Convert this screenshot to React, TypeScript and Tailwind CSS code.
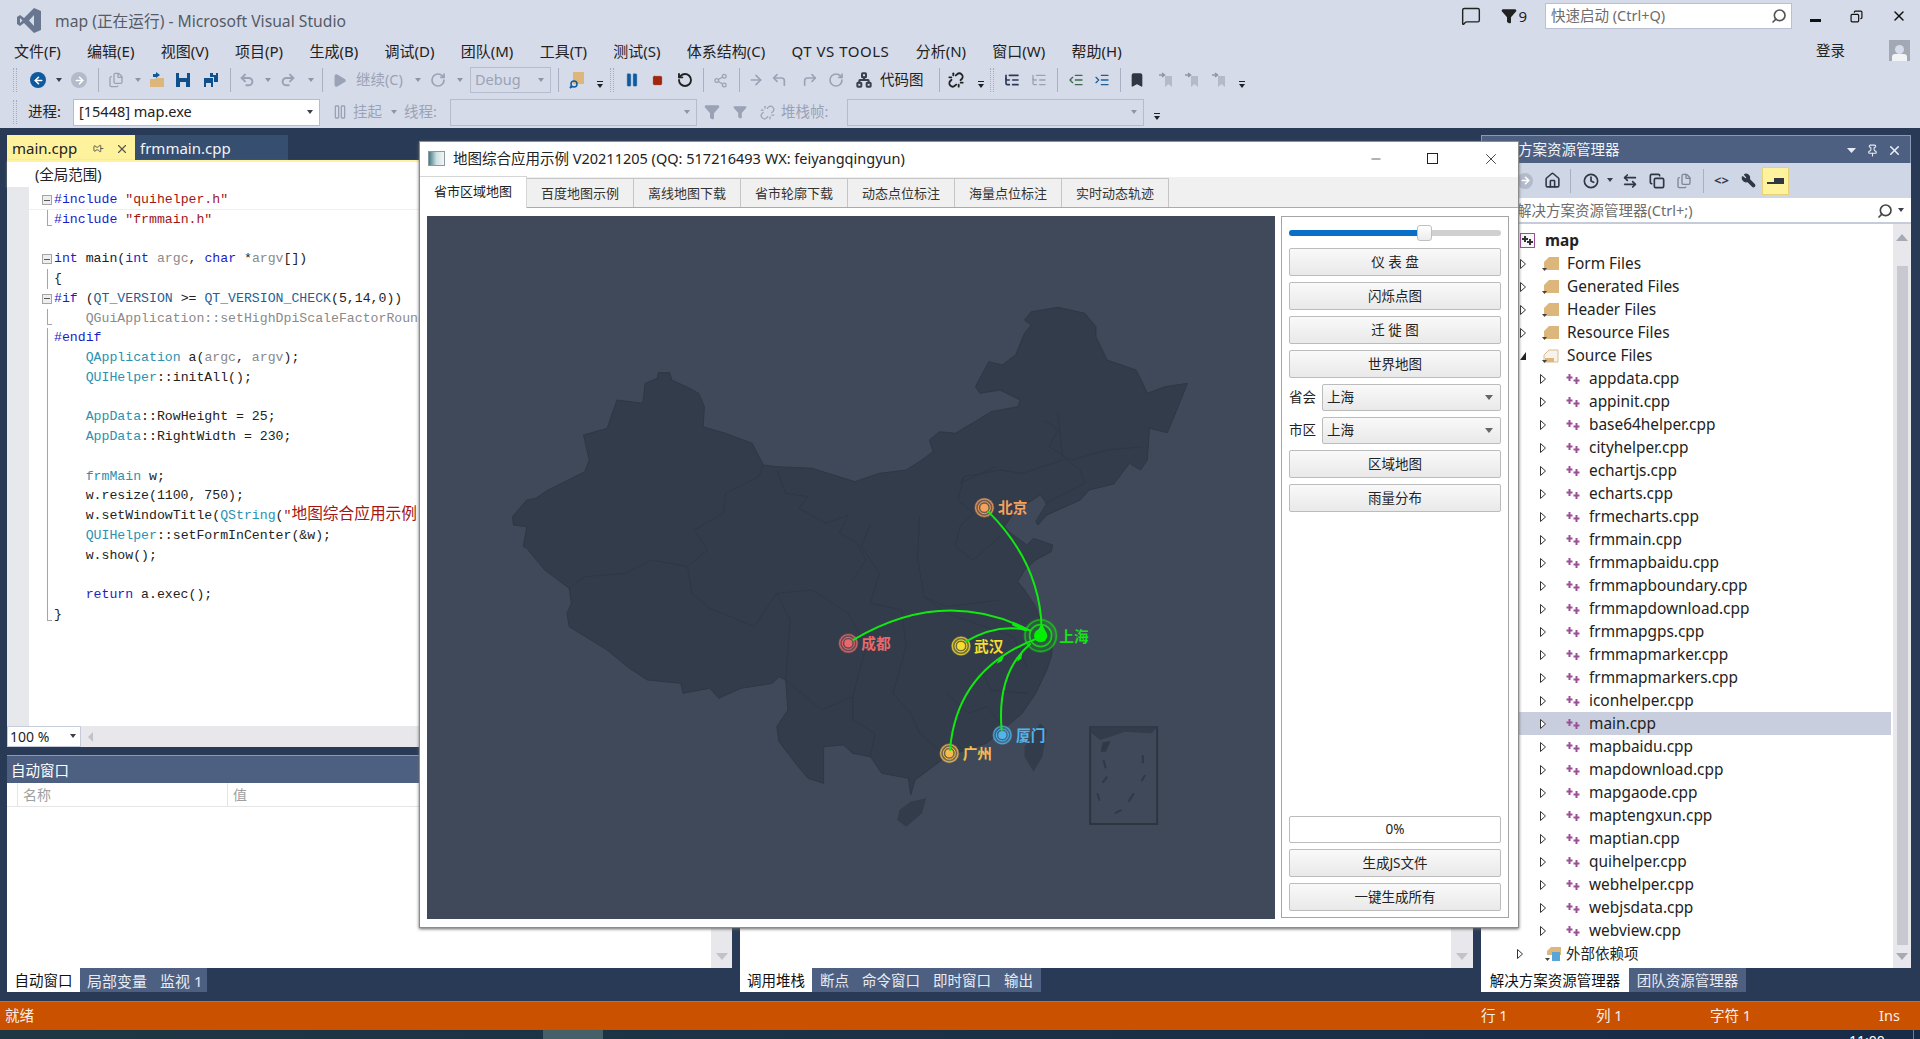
import {
  ArrowLeft, ArrowRight, Bookmark, Clock, Copy, Files, Home, MessageSquare, Minus, Pause, Pin, Play, Redo2,
  RotateCw, Search, Square, Undo2, Wrench, X, ArrowLeftRight, CornerUpLeft, CornerUpRight,
  ListTree, Network, Share2, ListIndentIncrease, ListIndentDecrease, Filter as Funnel, Pause as Suspend, Unlink,
} from 'lucide-react'

const GRAY = '#9aa3b5'

function Grip({ cls }: { cls: string }) {
  return <div className={`h-[24px] w-[4px] border-x border-dotted border-[#a3abc0] ${cls}`} />
}
function Sep({ cls }: { cls: string }) {
  return <div className={`h-[24px] w-px bg-[#a8b0c4] ${cls}`} />
}
function Dd({ cls, dark }: { cls: string; dark?: boolean }) {
  return (
    <svg width="8" height="5" viewBox="0 0 8 5" className={cls}>
      <path d="M1 0h6L4 4z" fill={dark ? '#3a3f4c' : '#8d96a9'} />
    </svg>
  )
}
function Over({ cls }: { cls: string }) {
  return (
    <svg width="8" height="8" viewBox="0 0 8 8" className={`mt-[10px] ${cls}`}>
      <path d="M1 0h6v1H1zM1 3h6L4 7z" fill="#222" />
    </svg>
  )
}
function Circle({ cls, color, arrow }: { cls: string; color: string; arrow: 'l' | 'r' }) {
  return (
    <div className={`flex h-[16px] w-[16px] items-center justify-center rounded-full ${cls}`} style={{ background: color }}>
      {arrow === 'l' ? <ArrowLeft size={11} color="white" strokeWidth={3.5} /> : <ArrowRight size={11} color="white" strokeWidth={3.5} />}
    </div>
  )
}
function BookmarkNav({ cls }: { cls: string }) {
  return (
    <svg width="16" height="16" viewBox="0 0 16 16" className={cls}>
      <path d="M7 4h7v11l-3.500-3L7 15z" fill="#b3bac9" />
      <path d="M1 3h5M4 1l2.500 2L4 5" fill="none" stroke="#8d96a9" strokeWidth="1.500" />
    </svg>
  )
}

function TreeChevron({ open, cls }: { open?: boolean; cls: string }) {
  return (
    <svg width="8" height="12" viewBox="0 0 8 12" className={`shrink-0 ${cls}`}>
      {open ? <path d="M7 2v8H1z" fill="#222" /> : <path d="M1.500 1.500 6.500 6l-5 4.500z" fill="white" stroke="#333" />}
    </svg>
  )
}
function CppIcon() {
  return (
    <svg width="15" height="12" viewBox="0 0 15 12" className="shrink-0">
      <path d="M3.500 1v7M0.500 4.500h6M10.500 4v7M7.500 7.500h6" stroke="#9b4f96" strokeWidth="2" />
    </svg>
  )
}
function TanFolder({ open }: { open?: boolean }) {
  return (
    <svg width="17" height="17" viewBox="0 0 17 17" className="shrink-0">
      {open ? (
        <path d="M2 8l5-5h9v12H2z" fill="#f7f3ec" stroke="#d9be8f" />
      ) : (
        <path d="M2 7l5-5h10v13H2z" fill="#dcb67a" />
      )}
      {open && <path d="M3 11h9v4H3z" fill="#dcb67a" />}
      <path d="M0 13h5L2.500 16z" fill="#444" />
    </svg>
  )
}

const FILES = [
  'appdata.cpp', 'appinit.cpp', 'base64helper.cpp', 'cityhelper.cpp', 'echartjs.cpp', 'echarts.cpp', 'frmecharts.cpp',
  'frmmain.cpp', 'frmmapbaidu.cpp', 'frmmapboundary.cpp', 'frmmapdownload.cpp', 'frmmapgps.cpp', 'frmmapmarker.cpp',
  'frmmapmarkers.cpp', 'iconhelper.cpp', 'main.cpp', 'mapbaidu.cpp', 'mapdownload.cpp', 'mapgaode.cpp',
  'maptengxun.cpp', 'maptian.cpp', 'quihelper.cpp', 'webhelper.cpp', 'webjsdata.cpp', 'webview.cpp',
]

const K = ({ c }: { c: string }) => <span className="text-[#1c1cc8]">{c}</span>
const T = ({ c }: { c: string }) => <span className="text-[#2b91af]">{c}</span>
const G = ({ c }: { c: string }) => <span className="text-[#8a8a8a]">{c}</span>
const S = ({ c }: { c: string }) => <span className="text-[#a31515]">{c}</span>
const M = ({ c }: { c: string }) => <span className="text-[#1f5f96]">{c}</span>

const CODE: { fold?: 'box' | 'line' | 'end'; code?: React.ReactNode }[] = [
  { fold: 'box', code: <><K c="#include" /> <S c={'"quihelper.h"'} /></> },
  { fold: 'end', code: <><K c="#include" /> <S c={'"frmmain.h"'} /></> },
  {},
  { fold: 'box', code: <><K c="int" /> main(<K c="int" /> <G c="argc" />, <K c="char" /> *<G c="argv" />[])</> },
  { fold: 'line', code: '{' },
  { fold: 'box', code: <><K c="#if" /> (<M c="QT_VERSION" /> &gt;= <M c="QT_VERSION_CHECK" />(5,14,0))</> },
  { fold: 'end', code: <G c="    QGuiApplication::setHighDpiScaleFactorRoundingPolicy" /> },
  { fold: 'line', code: <K c="#endif" /> },
  { fold: 'line', code: <>    <T c="QApplication" /> a(<G c="argc" />, <G c="argv" />);</> },
  { fold: 'line', code: <>    <T c="QUIHelper" />::initAll();</> },
  { fold: 'line' },
  { fold: 'line', code: <>    <T c="AppData" />::RowHeight = 25;</> },
  { fold: 'line', code: <>    <T c="AppData" />::RightWidth = 230;</> },
  { fold: 'line' },
  { fold: 'line', code: <>    <T c="frmMain" /> w;</> },
  { fold: 'line', code: '    w.resize(1100, 750);' },
  { fold: 'line', code: <>    w.setWindowTitle(<T c="QString" />(<S c={'"'} /><span className="text-[15.700px] leading-[19px] text-[#a31515]">地图综合应用示例</span></> },
  { fold: 'line', code: <>    <T c="QUIHelper" />::setFormInCenter(&amp;w);</> },
  { fold: 'line', code: '    w.show();' },
  { fold: 'line' },
  { fold: 'line', code: <>    <K c="return" /> a.exec();</> },
  { fold: 'end', code: '}' },
]

function QtButton({ label, cls }: { label: string; cls?: string }) {
  return (
    <div className={`flex h-[28px] items-center justify-center rounded-[2px] border border-[#bcbcbc] bg-gradient-to-b from-[#f9f9f9] to-[#e9e9e9] text-[13.500px] text-[#222] ${cls ?? ''}`}>
      {label}
    </div>
  )
}
function QtCombo({ label }: { label: string }) {
  return (
    <div className="flex h-[27px] items-center gap-[6px]">
      <span className="w-[27px] text-[13.500px] text-[#222]">{label}</span>
      <div className="flex h-[27px] flex-1 items-center justify-between rounded-[2px] border border-[#bcbcbc] bg-gradient-to-b from-[#f9f9f9] to-[#e9e9e9] pl-[4px] pr-[7px] text-[13.500px] text-[#222]">
        上海
        <svg width="8" height="5" viewBox="0 0 8 5"><path d="M0 0h8L4 5z" fill="#666" /></svg>
      </div>
    </div>
  )
}

const LAND =
  '28,110 60,60 80,55 105,32 190,-25 200,-60 187,-135 240,-155 262,-240 320,-230 325,-290 352,-305 355,-322 380,-322 385,-300 425,-275 445,-260 458,-220 455,-160 505,-140 565,-110 590,-45 620,-40 700,-35 735,-20 795,5 850,-20 910,-30 945,-60 970,-85 962,-120 985,-145 1020,-140 1070,-180 1100,-205 1160,-220 1165,-240 1120,-270 1075,-260 1065,-280 1095,-355 1125,-345 1155,-375 1175,-440 1190,-465 1175,-480 1190,-505 1250,-518 1310,-500 1335,-460 1335,-430 1360,-360 1425,-330 1440,-290 1450,-260 1490,-280 1540,-290 1510,-190 1495,-142 1455,-155 1450,-60 1435,-30 1410,-50 1375,12 1320,30 1300,60 1225,105 1205,135 1200,125 1225,70 1210,45 1170,80 1150,100 1130,140 1145,160 1180,195 1195,175 1238,195 1235,215 1200,240 1175,270 1160,305 1175,330 1200,380 1210,420 1240,470 1235,530 1225,570 1200,640 1170,700 1130,745 1090,790 1000,830 960,870 930,900 920,945 915,895 855,880 830,830 790,820 770,795 725,800 725,910 690,895 665,855 625,785 620,740 645,690 640,600 625,590 610,610 540,625 490,655 470,625 410,640 405,610 330,600 290,565 240,510 155,440 150,400 160,370 155,325 100,270 60,205 52,200 60,140 30,135'

const BORDERS = [
  '590,-45 580,-10 505,40 500,100 435,150 465,210 420,260 340,240 280,280 190,290 155,325',
  '420,260 430,340 470,385 570,440 620,340 650,420 640,600',
  '620,-30 640,40 690,50 670,85 730,130 780,105 760,160 800,190 820,240 790,300',
  '830,130 810,200 850,280 830,370 900,390 910,500',
  '940,110 935,230 950,350 1000,380 1120,360',
  '1040,-10 1025,60 1060,100 1030,140 1020,200 1060,240 1120,170',
  '1110,-40 1030,10 1040,-10 1120,-30 1170,-20 1260,-60',
  '1250,-200 1260,-70 1300,-30 1310,10 1220,70',
  '1220,-180 1250,-150 1230,-100 1280,-60 1360,-90 1440,-100',
  '640,600 720,690 790,650 790,720 840,760 830,830',
  '910,500 880,640 920,700 940,760 1000,830',
  '1000,640 1050,700 1090,680 1130,745',
  '1075,560 1100,630 1180,640',
  '950,350 1000,400 1150,470 1180,560',
  '620,340 700,330 780,400 820,500 790,650',
]

function ChinaMap() {
  const cities = [
    { x: 553, y: 143, c: '#f6a15c', n: '北京', r: 26, tx: 594, ty: 160 },
    { x: 145, y: 550, c: '#e8696b', n: '成都', r: 26, tx: 184, ty: 568 },
    { x: 483, y: 558, c: '#f7de2e', n: '武汉', r: 26, tx: 522, ty: 576 },
    { x: 448, y: 880, c: '#f6bd4e', n: '广州', r: 26, tx: 488, ty: 898 },
    { x: 607, y: 825, c: '#4fb6ee', n: '厦门', r: 26, tx: 648, ty: 844 },
  ]
  return (
    <svg viewBox="427 216 848 703" className="h-[703px] w-[848px] bg-[#3f4959]">
      <g transform="translate(500 480) scale(0.4464 0.3333)">
        <polygon points={LAND} fill="#333c4a" stroke="#2f3744" strokeWidth="1" vectorEffect="non-scaling-stroke" />
        {BORDERS.map((b) => (
          <polyline key={b} points={b} fill="none" stroke="#2e3744" strokeWidth="1" vectorEffect="non-scaling-stroke" />
        ))}
        <polygon points="1175,800 1210,730 1225,750 1215,830 1195,875 1175,830" fill="#333c4a" />
        <polygon points="895,990 920,965 955,955 945,1000 910,1040 890,1020" fill="#333c4a" />
        <rect x="1322" y="742" width="150" height="290" fill="none" stroke="#2d3541" strokeWidth="2" vectorEffect="non-scaling-stroke" />
        <polygon points="1322,742 1472,742 1460,760 1400,755 1345,780 1325,760" fill="#333c4a" />
        <path d="M1352 790l12-3-8 25h-8zM1352 840l5 25M1440 825v25M1445 885l-8 18M1360 890l-10 18M1338 940l5 22M1420 940l-12 25M1392 990l-15 10" stroke="#303946" strokeWidth="2" fill="#303946" vectorEffect="non-scaling-stroke" />
      </g>
      <g transform="translate(800 460) scale(0.3333)">
        {cities.map((p) => (
          <g key={p.n}>
            <circle cx={p.x} cy={p.y} r={p.r + 4} fill={p.c} opacity="0.3" />
            <circle cx={p.x} cy={p.y} r={p.r} fill="none" stroke={p.c} strokeWidth="4" opacity="0.75" />
            <circle cx={p.x} cy={p.y} r={p.r - 8} fill="none" stroke={p.c} strokeWidth="3" />
            <circle cx={p.x} cy={p.y} r={12} fill={p.c} />
            <text x={p.tx} y={p.ty} fill={p.c} fontSize="44" fontWeight="700" fontFamily="'Noto Sans CJK SC', sans-serif">{p.n}</text>
          </g>
        ))}
        <circle cx="722" cy="527" r="52" fill="#16e016" opacity="0.2" />
        <circle cx="722" cy="527" r="47" fill="none" stroke="#18d018" strokeWidth="5" opacity="0.7" />
        <circle cx="722" cy="527" r="33" fill="none" stroke="#18e018" strokeWidth="5" opacity="0.85" />
        <circle cx="722" cy="527" r="20" fill="#00f000" />
        <text x="778" y="546" fill="#18e018" fontSize="44" fontWeight="700" fontFamily="'Noto Sans CJK SC', sans-serif">上海</text>
        <g fill="none" stroke="#10ea10" strokeWidth="6" strokeLinecap="round">
          <path d="M565 155Q720 310 725 505" />
          <path d="M160 540Q430 379 690 512" />
          <path d="M497 545Q590 490 680 510" />
          <path d="M450 870Q470 630 705 538" />
          <path d="M605 810Q590 640 690 552" />
        </g>
        <g fill="#10ea10">
          <path d="M725 490l12 24-24 0z" />
          <path d="M640 485l40 20-4 9-40-18z" />
          <path d="M612 587l-6 16-16 8 8-16z" />
          <path d="M668 575l-4 20-12 10 4-20z" />
        </g>
      </g>
    </svg>
  )
}

export default function App() {
  return (
    <div className="relative flex h-[1039px] w-[1920px] flex-col overflow-hidden bg-[#293a56] font-['Noto_Sans','Noto_Sans_CJK_SC',sans-serif] text-[#1e1e1e]">
      {/* Title + menu + toolbars */}
      <header className="flex h-[128px] shrink-0 flex-col bg-[#d6dbe9]">
        <div className="flex h-[40px] items-start">
          <svg width="24" height="25" viewBox="0 0 24 25" className="ml-[17px] mt-[8px]">
            <path d="M17 0l7 3v19l-7 3L7 15l-4 3-3-2V9l3-2 4 3zM17 7l-5 5.500 5 5.500zM3 10v5l2.500-2.500z" fill="#68768f" fillRule="evenodd" />
          </svg>
          <span className="ml-[14px] mt-[10px] text-[15.700px] text-[#555b66]">map (正在运行) - Microsoft Visual Studio</span>
          <div className="ml-auto mt-[3px] flex items-center">
            <MessageSquare size={20} strokeWidth={1.700} color="#222" />
            <Funnel size={16} className="ml-[20px]" fill="#222" color="#222" />
            <span className="ml-[1px] text-[15px]">9</span>
            <div className="ml-[18px] flex h-[26px] w-[247px] items-center justify-between border border-[#b8c0d2] bg-white pl-[5px] pr-[4px] text-[14.500px] text-[#6d6d6d]">
              快速启动 (Ctrl+Q)
              <Search size={16} strokeWidth={2.500} color="#555" className="-scale-x-100" />
            </div>
            <div className="ml-[18px] mt-[9px] h-[3px] w-[11px] bg-[#111]" />
            <Copy size={13} strokeWidth={2.200} color="#111" className="ml-[29px] -scale-x-100" />
            <X size={16} strokeWidth={2.200} color="#111" className="ml-[28px] mr-[13px]" />
          </div>
        </div>
        <div className="relative flex h-[22px] items-center gap-[26.300px] pl-[14px] text-[15px] text-[#222]">
          {['文件(F)', '编辑(E)', '视图(V)', '项目(P)', '生成(B)', '调试(D)', '团队(M)', '工具(T)', '测试(S)', '体系结构(C)'].map((m) => (
            <span key={m}>{m}</span>
          ))}
          <span className="tracking-[0.500px]">QT VS TOOLS</span>
          {['分析(N)', '窗口(W)', '帮助(H)'].map((m) => (
            <span key={m}>{m}</span>
          ))}
          <span className="ml-auto mr-[75px] text-[14.500px]">登录</span>
          <div className="absolute right-[10px] top-0 flex h-[21px] w-[21px] flex-col items-center justify-end overflow-hidden bg-[#a3a8b5]">
            <div className="h-[9px] w-[9px] rounded-full bg-[#d6dbe9]" />
            <div className="h-[7px] w-[15px] rounded-t-[3px] bg-[#f2f3f6]" />
          </div>
        </div>
        <div className="mt-[2px] flex h-[32px] items-center text-[14.500px] text-[#9aa3b5]">
          <Grip cls="ml-[13px]" />
          <Circle cls="ml-[13px]" color="#0e5a9e" arrow="l" />
          <Dd dark cls="ml-[9px]" />
          <Circle cls="ml-[8px]" color="#b3bac9" arrow="r" />
          <Sep cls="ml-[11px]" />
          <Files size={16} color={GRAY} className="ml-[9px]" />
          <Dd cls="ml-[10px]" />
          <svg width="16" height="16" viewBox="0 0 16 16" className="ml-[7px]"><path d="M1 7h5l1-1h8v9H1z" fill="#dcb67a" /><path d="M4 5V2h3V0l4 3-4 3V5z" fill="#0e5a9e" /></svg>
          <svg width="16" height="16" viewBox="0 0 16 16" className="ml-[10px]"><path d="M1 1h14v14H1z" fill="#0e4f8c" /><path d="M4 1h8v5H4zM5 10h6v5H5z" fill="#d6dbe9" /></svg>
          <svg width="16" height="16" viewBox="0 0 16 16" className="ml-[12px]"><path d="M1 6h9v9H1z" fill="#0e4f8c" /><path d="M7 1h8v9h-4V5H7z" fill="#0e4f8c" /><path d="M3 11h5v4H3zM10 1h3v2h-3z" fill="#d6dbe9" /></svg>
          <Sep cls="ml-[11px]" />
          <Undo2 size={16} color={GRAY} strokeWidth={3} className="ml-[8px]" />
          <Dd cls="ml-[9px]" />
          <Redo2 size={16} color={GRAY} strokeWidth={3} className="ml-[8px]" />
          <Dd cls="ml-[11px]" />
          <Sep cls="ml-[7px]" />
          <Play size={15} color={GRAY} fill={GRAY} className="ml-[9px]" />
          <span className="ml-[9px] w-[50px] whitespace-nowrap">继续(C)</span>
          <Dd cls="ml-[8px]" />
          <RotateCw size={16} color={GRAY} strokeWidth={2.500} className="ml-[8px]" />
          <Dd cls="ml-[10px]" />
          <div className="ml-[6px] flex h-[26px] w-[81px] items-center justify-between border border-[#b5bccd] pl-[4px] pr-[5px]">
            Debug <Dd cls="" />
          </div>
          <Sep cls="ml-[7px]" />
          <svg width="16" height="18" viewBox="0 0 16 18" className="ml-[10px]"><path d="M4 1h11v12H4z" fill="#dcb67a" /><circle cx="5" cy="13" r="3" fill="none" stroke="#0e5a9e" strokeWidth="1.500" /><path d="M3 15l-2 2" stroke="#0e5a9e" strokeWidth="2" /></svg>
          <Over cls="ml-[11px]" />
          <Grip cls="ml-[6px]" />
          <Pause size={16} color="#0e5a9e" fill="#0e5a9e" strokeWidth={1} className="ml-[10px]" />
          <Square size={11} color="#a1260d" fill="#a1260d" className="ml-[12px] mr-[3px]" />
          <RotateCw size={16} color="#222" strokeWidth={2.800} className="ml-[11px] -scale-x-100" />
          <Sep cls="ml-[10px]" />
          <Share2 size={15} color={GRAY} className="ml-[9px]" />
          <Sep cls="ml-[11px]" />
          <ArrowRight size={16} color={GRAY} strokeWidth={2.500} className="ml-[8px]" />
          <CornerUpLeft size={16} color={GRAY} strokeWidth={2.500} className="ml-[7px]" />
          <CornerUpRight size={16} color={GRAY} strokeWidth={2.500} className="ml-[15px]" />
          <RotateCw size={16} color={GRAY} strokeWidth={2.500} className="ml-[10px]" />
          <Network size={16} color="#3a3f4c" strokeWidth={3} className="ml-[12px]" />
          <span className="ml-[8px] w-[45px] whitespace-nowrap text-[#222]">代码图</span>
          <Sep cls="ml-[14px]" />
          <Unlink size={16} color="#222" strokeWidth={2.800} className="ml-[8px]" />
          <Over cls="ml-[13px]" />
          <Grip cls="ml-[5px]" />
          <ListTree size={16} color="#2a3a57" strokeWidth={2.500} className="ml-[10px]" />
          <ListTree size={16} color={GRAY} className="ml-[11px]" />
          <Sep cls="ml-[10px]" />
          <ListIndentDecrease size={16} color="#3c6b4a" className="ml-[10px]" />
          <ListIndentIncrease size={16} color="#1f5f96" className="ml-[10px]" />
          <Sep cls="ml-[10px]" />
          <Bookmark size={16} color="#2f3744" fill="#2f3744" className="ml-[8px]" />
          <BookmarkNav cls="ml-[13px]" />
          <BookmarkNav cls="ml-[10px]" />
          <BookmarkNav cls="ml-[11px]" />
          <Over cls="ml-[11px]" />
        </div>
        <div className="flex h-[32px] items-center text-[14.500px] text-[#9aa3b5]">
          <Grip cls="ml-[13px]" />
          <span className="ml-[11px] w-[35px] whitespace-nowrap text-[#222]">进程:</span>
          <div className="ml-[10px] flex h-[27px] w-[247px] items-center justify-between border border-[#b5bccd] bg-white pl-[5px] pr-[5px] text-[#222]">
            [15448] map.exe <Dd dark cls="" />
          </div>
          <Suspend size={16} color={GRAY} className="ml-[12px]" />
          <span className="ml-[5px] w-[31px] whitespace-nowrap">挂起</span>
          <Dd cls="ml-[6px]" />
          <span className="ml-[6px] w-[35px] whitespace-nowrap">线程:</span>
          <div className="ml-[11px] flex h-[27px] w-[247px] items-center justify-end border border-[#b5bccd] pr-[5px]"><Dd cls="" /></div>
          <Funnel size={16} color={GRAY} fill={GRAY} className="ml-[7px]" />
          <Funnel size={14} color={GRAY} fill={GRAY} className="ml-[13px]" />
          <Unlink size={15} color={GRAY} className="ml-[13px]" />
          <span className="ml-[6px] w-[49px] whitespace-nowrap">堆栈帧:</span>
          <div className="ml-[17px] flex h-[27px] w-[297px] items-center justify-end border border-[#b5bccd] pr-[5px]"><Dd cls="" /></div>
          <Over cls="ml-[9px]" />
        </div>
      </header>

      {/* Docked panes */}
      <main className="flex min-h-0 flex-1 pl-[7px] pr-[9px] pt-[7px]">
        <div className="flex w-[1466px] shrink-0 flex-col">
          <div className="flex h-[25px] text-[15px]">
            <div className="flex w-[128px] items-center bg-[#fff29d] pl-[5px] pt-[2px] text-[#222]">
              main.cpp
              <Pin size={11} className="ml-[16px] -rotate-90" color="#555" />
              <X size={14} className="ml-[11px]" color="#555" />
            </div>
            <div className="flex w-[153px] items-center bg-[#364e6f] pl-[5px] pt-[2px] text-[#f2f4f8]">frmmain.cpp</div>
          </div>
          <div className="flex h-[27px] items-center border-t-2 border-[#fff29d] bg-white pl-[28px] text-[14.500px] text-[#222] shadow-[0_1px_2px_#8a8a8a]">(全局范围)</div>
          <div className="flex h-[539px] overflow-hidden bg-white">
            <div className="w-[22px] shrink-0 bg-[#e7e8ec]" />
            <div className="pt-[3px] font-['Liberation_Mono','Noto_Sans_CJK_SC',monospace] text-[13.200px] leading-[19.750px] text-[#222]">
              {CODE.map((row, i) => (
                <div key={i} className={`flex h-[19.750px] w-[1400px] ${i === 0 ? 'border-b border-[#efefef]' : ''}`}>
                  <div className="relative w-[25px] shrink-0">
                    {row.fold === 'box' && (
                      <div className="absolute left-[13px] top-[5px] flex h-[10px] w-[10px] items-center justify-center border border-[#a5a5a5] bg-[#eee]">
                        <div className="h-px w-[6px] bg-[#555]" />
                      </div>
                    )}
                    {row.fold === 'line' && <div className="absolute left-[18px] top-0 h-full w-px bg-[#a5a5a5]" />}
                    {row.fold === 'end' && <div className="absolute left-[18px] top-0 h-[16px] w-[5px] border-b border-l border-[#a5a5a5]" />}
                  </div>
                  <span className="whitespace-pre">{row.code}</span>
                </div>
              ))}
            </div>
          </div>
          <div className="flex h-[21px] bg-[#e8e8ec]">
            <div className="flex w-[74px] items-center justify-between border border-[#c5cbd9] bg-white pl-[2px] pr-[3px] text-[14px]">
              100 % <Dd dark cls="" />
            </div>
            <svg width="6" height="10" viewBox="0 0 6 10" className="ml-[7px] mt-[6px]"><path d="M5 0v10L0 5z" fill="#c2c3c9" /></svg>
          </div>
          <div className="mt-[8px] flex min-h-0 flex-1 gap-[8px]">
            <section className="flex w-[725px] flex-col">
              <div className="flex h-[28px] items-center border-t border-[#8a9ab5] bg-[#4d6082] pl-[4px] pt-[2px] text-[14.500px] text-white">自动窗口</div>
              <div className="relative flex-1 bg-white">
                <div className="flex h-[24px] items-center border-b border-[#e5e5e5] text-[14px] text-[#a0a0a0]">
                  <div className="h-full w-[11px] border-r border-[#e5e5e5]" />
                  <span className="w-[210px] border-r border-[#e5e5e5] pl-[5px] leading-[24px]">名称</span>
                  <span className="pl-[5px]">值</span>
                </div>
                <div className="absolute bottom-0 right-0 top-0 flex w-[21px] items-end justify-center bg-[#e8e8ec] pb-[8px]">
                  <svg width="12" height="7" viewBox="0 0 12 7"><path d="M0 0h12L6 7z" fill="#c2c3c9" /></svg>
                </div>
              </div>
              <div className="flex h-[24px] text-[14.500px]">
                <div className="flex w-[73px] items-center justify-center bg-white pt-[2px] text-[#111]">自动窗口</div>
                <div className="flex w-[127px] items-center gap-[13px] bg-[#4d6082] pl-[7px] pt-[2px] text-[#e8ecf3]">
                  <span className="text-[15px]">局部变量</span><span className="text-[15px]">监视 1</span>
                </div>
              </div>
            </section>
            <section className="flex flex-1 flex-col">
              <div className="relative flex-1 bg-white">
                <div className="absolute bottom-0 right-0 top-0 flex w-[22px] items-end justify-center bg-[#e8e8ec] pb-[8px]">
                  <svg width="12" height="7" viewBox="0 0 12 7"><path d="M0 0h12L6 7z" fill="#c2c3c9" /></svg>
                </div>
              </div>
              <div className="flex h-[24px] text-[14.500px]">
                <div className="flex w-[72px] items-center justify-center bg-white pt-[2px] text-[#111]">调用堆栈</div>
                <div className="flex w-[229px] items-center gap-[13px] bg-[#4d6082] pl-[8px] pt-[2px] text-[#e8ecf3]">
                  <span>断点</span><span>命令窗口</span><span>即时窗口</span><span>输出</span>
                </div>
              </div>
            </section>
          </div>
        </div>

        {/* Solution explorer */}
        <aside className="ml-[8px] flex min-w-0 flex-1 flex-col pb-0">
          <div className="flex h-[28px] items-center border border-b-0 border-[#8a9ab5] bg-[#4d6082] pl-[7px] pr-[8px] pt-[1px] text-[14.500px] text-[#f2f4f8]">
            解决方案资源管理器
            <svg width="9" height="5" viewBox="0 0 9 5" className="ml-auto"><path d="M0 0h9L4.500 5z" fill="#e8ecf3" /></svg>
            <Pin size={13} color="#e8ecf3" className="ml-[10px]" />
            <X size={15} color="#e8ecf3" strokeWidth={2.500} className="ml-[8px]" />
          </div>
          <div className="flex h-[35px] items-center bg-[#cfd6e5]">
            <Circle cls="ml-[36px]" color="#b3bac9" arrow="r" />
            <Home size={17} color="#2f3744" strokeWidth={2.200} className="ml-[11px]" />
            <Sep cls="ml-[9px]" />
            <Clock size={16} color="#2f3744" strokeWidth={2.500} className="ml-[12px]" />
            <Dd dark cls="ml-[7px]" />
            <ArrowLeftRight size={16} color="#2f3744" strokeWidth={2.500} className="ml-[8px]" />
            <Copy size={16} color="#2f3744" strokeWidth={2.500} className="ml-[11px]" />
            <Files size={16} color="#7d8698" className="ml-[11px]" />
            <Sep cls="ml-[11px]" />
            <span className="ml-[10px] text-[13px] font-bold text-[#2f3744]">&lt;&gt;</span>
            <Wrench size={15} color="#2f3744" fill="#2f3744" className="ml-[12px] -scale-x-100" />
            <div className="ml-[6px] flex h-[28px] w-[27px] items-center justify-center border border-[#e6d27a] bg-[#fff29d]">
              <svg width="17" height="8" viewBox="0 0 17 8"><path d="M0 5h17v2H0zM7 1h10v5H7z" fill="#2f3744" /></svg>
            </div>
          </div>
          <div className="flex h-[26px] items-center border-b-2 border-[#c5cbd9] bg-white pl-[36px] pr-[6px] pt-[1px] text-[14.500px] text-[#6d6d6d]">
            解决方案资源管理器(Ctrl+;)
            <Search size={16} strokeWidth={2.500} color="#444" className="ml-auto -scale-x-100" />
            <Dd dark cls="ml-[4px]" />
          </div>
          <div className="relative min-h-0 flex-1 bg-white pt-[5px] text-[15.400px] leading-[23px] text-[#222]">
            <div className="flex h-[23px] items-center pl-[39px]">
              <svg width="15" height="15" viewBox="0 0 15 15" className="shrink-0"><rect x="0.500" y="0.500" width="14" height="14" fill="#f6f6f6" stroke="#9b4f96" /><path d="M5 3v6M2 6h6M10 6v6M7 9h6" stroke="#333" strokeWidth="2" /></svg>
              <span className="ml-[10px] font-bold">map</span>
            </div>
            {['Form Files', 'Generated Files', 'Header Files', 'Resource Files', 'Source Files'].map((f) => (
              <div key={f} className="flex h-[23px] items-center pl-[38px]">
                <TreeChevron open={f === 'Source Files'} cls="" />
                <div className="ml-[15px]"><TanFolder open={f === 'Source Files'} /></div>
                <span className="ml-[8px]">{f}</span>
              </div>
            ))}
            {FILES.map((f) => (
              <div key={f} className={`mr-[20px] flex h-[23px] items-center pl-[58px] ${f === 'main.cpp' ? 'bg-[#c9cede]' : ''}`}>
                <TreeChevron cls="" />
                <div className="ml-[19px]"><CppIcon /></div>
                <span className="ml-[8px]">{f}</span>
              </div>
            ))}
            <div className="flex h-[23px] items-center pl-[35px]">
              <TreeChevron cls="" />
              <svg width="17" height="17" viewBox="0 0 17 17" className="ml-[21px] shrink-0"><path d="M2 6l4-4h10v8H2z" fill="#dcb67a" /><path d="M7 7h8v9H7z" fill="#5aa5d8" /><path d="M0 13h5L2.500 16z" fill="#444" /></svg>
              <span className="ml-[4px] text-[14.500px]">外部依赖项</span>
            </div>
            <div className="absolute bottom-0 right-0 top-0 flex w-[18px] flex-col items-center bg-[#e8e8ec] pb-[8px] pt-[10px]">
              <svg width="12" height="7" viewBox="0 0 12 7"><path d="M6 0l6 7H0z" fill="#a5aab5" /></svg>
              <div className="mt-[25px] w-[11px] flex-1 bg-[#c8c9d0]" />
              <svg width="12" height="7" viewBox="0 0 12 7" className="mt-[8px]"><path d="M0 0h12L6 7z" fill="#a5aab5" /></svg>
            </div>
          </div>
          <div className="flex h-[24px] text-[14.500px]">
            <div className="flex w-[148px] items-center justify-center bg-white pt-[1px] text-[#111]">解决方案资源管理器</div>
            <div className="flex w-[117px] items-center justify-center bg-[#4d6082] pt-[1px] text-[#e8ecf3]">团队资源管理器</div>
          </div>
        </aside>
      </main>

      <footer className="mt-[9px] flex h-[29px] shrink-0 items-center border-t border-[#e0660f] bg-[#ca5100] text-[14.500px] text-[#f8efe8]">
        <span className="ml-[5px] w-[1476px]">就绪</span>
        <span className="w-[115px]">行 1</span>
        <span className="w-[114px]">列 1</span>
        <span className="w-[169px]">字符 1</span>
        <span>Ins</span>
      </footer>
      <div className="flex h-[9px] shrink-0 overflow-hidden bg-gradient-to-r from-[#1f3644] to-[#172a48]">
        <div className="ml-[543px] h-full w-[60px] bg-[#46606a]" />
        <span className="ml-[1246px] mt-[4px] text-[14px] leading-[14px] text-white">11:00</span>
        <div className="ml-auto mr-[6px] h-full w-px bg-[#6d7d90]" />
      </div>

      {/* The running Qt app floats above the IDE */}
      <div className="absolute left-[419px] top-[141px] flex h-[787px] w-[1100px] flex-col border border-[#8c8c8c] bg-white shadow-[0_1px_3px_#666]">
        <div className="flex h-[35px] shrink-0 items-center bg-white pb-[2px]">
          <div className="ml-[8px] h-[15px] w-[17px] border border-[#8a98a0] bg-gradient-to-r from-[#3e7f86] via-[#cfe0e4] to-[#f5f5f5]" />
          <span className="ml-[8px] text-[14.500px] text-[#222]">地图综合应用示例 V20211205 (QQ: 517216493 WX: feiyangqingyun)</span>
          <Minus size={14} color="#222" strokeWidth={1.200} className="ml-auto" />
          <div className="ml-[44px] h-[11px] w-[11px] border border-[#222]" />
          <X size={18} color="#222" strokeWidth={1.100} className="ml-[44px] mr-[18px]" />
        </div>
        <div className="flex h-[31px] shrink-0 items-end border-b border-[#ababab] bg-[#f0f0f0] text-[13px] text-[#333]">
          <div className="relative -mb-px flex h-[32px] w-[107px] items-center justify-center border-r border-t border-[#d5d5d5] bg-white pb-[1px] text-[#222]">省市区域地图</div>
          {['百度地图示例', '离线地图下载', '省市轮廓下载', '动态点位标注', '海量点位标注', '实时动态轨迹'].map((t) => (
            <div key={t} className="flex h-[29px] w-[107px] items-center justify-center border-r border-t border-[#c5c5c5] bg-[#f0f0f0] pt-[2px]">{t}</div>
          ))}
        </div>
        <div className="flex min-h-0 flex-1 gap-[6px] pl-[7px] pt-[8px]">
          <div className="h-[703px] w-[848px] shrink-0"><ChinaMap /></div>
          <div className="flex h-[702px] w-[228px] flex-col border border-[#a5a5a5] bg-white px-[7px] pt-[7px]">
            <div className="relative flex h-[18px] items-center">
              <div className="h-[6px] flex-1 rounded-full bg-[#d0d0d0]" />
              <div className="absolute left-0 h-[6px] w-[130px] rounded-l-full bg-[#0a6fc9]" />
              <div className="absolute left-[128px] h-[16px] w-[15px] rounded-[3px] border border-[#c0c0c0] bg-gradient-to-b from-white to-[#ececec]" />
            </div>
            <div className="mt-[6px] flex flex-1 flex-col gap-[6px] pb-[6px]">
              <QtButton label="仪 表 盘" />
              <QtButton label="闪烁点图" />
              <QtButton label="迁 徙 图" />
              <QtButton label="世界地图" />
              <QtCombo label="省会" />
              <QtCombo label="市区" />
              <QtButton label="区域地图" />
              <QtButton label="雨量分布" />
              <div className="mt-auto flex h-[27px] items-center justify-center rounded-[2px] border border-[#bcbcbc] bg-white text-[13.500px] text-[#222]">0%</div>
              <QtButton label="生成JS文件" />
              <QtButton label="一键生成所有" />
            </div>
          </div>
        </div>
      </div>
    </div>
  )
}
